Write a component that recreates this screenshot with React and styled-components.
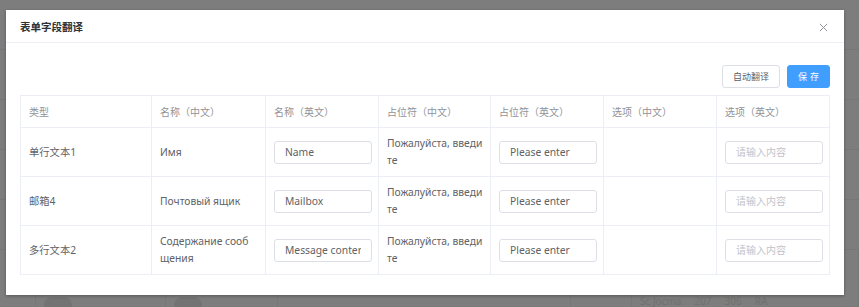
import styled, { createGlobalStyle } from 'styled-components'

const GlobalStyle = createGlobalStyle`
    html, body {
        margin: 0;
        padding: 0;
        background: #ffffff;
    }
    body {
        font-family: "Noto Sans", "Noto Sans CJK SC", sans-serif;
        overflow: hidden;
    }
`

const columns = [
    { title: '类型', width: 131 },
    { title: '名称（中文）', width: 114 },
    { title: '名称（英文）', width: 113 },
    { title: '占位符（中文）', width: 112 },
    { title: '占位符（英文）', width: 113 },
    { title: '选项（中文）', width: 113 },
    { title: '选项（英文）', width: 113 },
]

const rows = [
    { type: '单行文本1', nameZh: 'Имя', nameEn: 'Name', phZh: 'Пожалуйста, введите', phEn: 'Please enter' },
    { type: '邮箱4', nameZh: 'Почтовый ящик', nameEn: 'Mailbox', phZh: 'Пожалуйста, введите', phEn: 'Please enter' },
    { type: '多行文本2', nameZh: 'Содержание сообщения', nameEn: 'Message content', phZh: 'Пожалуйста, введите', phEn: 'Please enter' },
]

const App = () => {
    return (
        <>
            <GlobalStyle />
            <Page>
                <PageRow />
                <PageRow />
                <PageRow />
                <PageRow />
                <PageRow />
                <BottomRow>
                    <BottomCell w={36} />
                    <BottomCell w={130}><Switch /></BottomCell>
                    <BottomCell w={112}><Switch /></BottomCell>
                    <BottomCell w={293} />
                    <BottomCell w={61} />
                    <BottomCell w={227}>
                        <FaintText>Sc Jocma&nbsp;&nbsp;&nbsp;&nbsp;&nbsp;207&nbsp;&nbsp;&nbsp;&nbsp;&nbsp;306&nbsp;&nbsp;&nbsp;&nbsp;&nbsp;RA</FaintText>
                    </BottomCell>
                </BottomRow>
                <Overlay>
                    <Dialog>
                        <Header>
                            <Title>表单字段翻译</Title>
                            <Close>
                                <svg width="9" height="9" viewBox="0 0 10 10">
                                    <path d="M1 1L9 9M9 1L1 9" stroke="#909399" strokeWidth="1.1" />
                                </svg>
                            </Close>
                        </Header>
                        <Body>
                            <Toolbar>
                                <Button>自动翻译</Button>
                                <Button primary>保存</Button>
                            </Toolbar>
                            <Table>
                                <colgroup>
                                    {columns.map(c => <col key={c.title} style={{ width: c.width }} />)}
                                </colgroup>
                                <thead>
                                    <tr>
                                        {columns.map(c => <Th key={c.title}>{c.title}</Th>)}
                                    </tr>
                                </thead>
                                <tbody>
                                    {rows.map(r => (
                                        <tr key={r.type}>
                                            <Td>{r.type}</Td>
                                            <Td pr={11}>{r.nameZh}</Td>
                                            <Td><Input value={r.nameEn} readOnly /></Td>
                                            <Td pr={5}>{r.phZh}</Td>
                                            <Td><Input value={r.phEn} readOnly /></Td>
                                            <Td />
                                            <Td><Input placeholder="请输入内容" readOnly /></Td>
                                        </tr>
                                    ))}
                                </tbody>
                            </Table>
                        </Body>
                    </Dialog>
                </Overlay>
            </Page>
        </>
    )
}

const Page = styled.div`
    position: relative;
    width: 859px;
    height: 307px;
    display: flex;
    flex-direction: column;
    background: #fafafa;
`

const PageRow = styled.div`
    height: 49px;
    border-bottom: 1px solid #ececec;
`

const BottomRow = styled.div`
    display: flex;
    flex: 1;
    align-items: flex-end;
`

const BottomCell = styled.div`
    width: ${p => p.w}px;
    height: 100%;
    border-right: 1px solid #eeeeee;
    box-sizing: border-box;
    display: flex;
    align-items: flex-end;
    padding-left: 8px;
`

const Switch = styled.div`
    width: 28px;
    height: 10px;
    border-radius: 8px 8px 0 0;
    background: #e6e6e6;
`

const FaintText = styled.div`
    font-size: 10px;
    color: #e2e2e2;
    line-height: 12px;
    white-space: nowrap;
`

const Overlay = styled.div`
    position: absolute;
    inset: 0;
    background: rgba(0, 0, 0, 0.5);
    padding: 10px 0 0 6px;
`

const Dialog = styled.div`
    width: 838px;
    height: 285px;
    background: #ffffff;
    box-shadow: 0 1px 3px rgba(0, 0, 0, 0.3);
    display: flex;
    flex-direction: column;
`

const Header = styled.div`
    height: 32px;
    border-bottom: 1px solid #ebeef5;
    display: flex;
    align-items: center;
    justify-content: space-between;
    padding: 0 16px 0 14px;
`

const Title = styled.div`
    font-family: "Noto Sans CJK SC", sans-serif;
    font-size: 10.5px;
    font-weight: 700;
    color: #303133;
    padding-top: 1px;
`

const Close = styled.div`
    display: flex;
    align-items: center;
    padding-top: 2px;
`

const Body = styled.div`
    padding: 22px 14px 0 14px;
`

const Toolbar = styled.div`
    display: flex;
    justify-content: flex-end;
    gap: 7px;
    margin-bottom: 7px;
`

const Button = styled.div`
    height: 23px;
    box-sizing: border-box;
    padding: 0 ${p => (p.primary ? '7px 0 10px' : '10px')};
    display: flex;
    align-items: center;
    font-family: "Noto Sans CJK SC", sans-serif;
    font-size: 9px;
    letter-spacing: ${p => (p.primary ? 3 : 0)}px;
    border-radius: 3px;
    border: 1px solid ${p => (p.primary ? '#409eff' : '#dcdfe6')};
    background: ${p => (p.primary ? '#409eff' : '#ffffff')};
    color: ${p => (p.primary ? '#ffffff' : '#606266')};
`

const Table = styled.table`
    width: 809px;
    table-layout: fixed;
    border-collapse: collapse;
    border: 1px solid #ebeef5;
    font-size: 10.3px;
`

const Th = styled.th`
    height: 31px;
    padding: 0 8px;
    text-align: left;
    font-weight: 400;
    font-size: 10px;
    color: #909399;
    font-family: "Noto Sans CJK SC", sans-serif;
    border: 1px solid #ebeef5;
    white-space: nowrap;
`

const Td = styled.td`
    height: 48px;
    padding: 0 ${p => p.pr ?? 7}px 0 8px;
    color: #606266;
    line-height: 17px;
    border: 1px solid #ebeef5;
    vertical-align: middle;
    word-break: break-all;
`

const Input = styled.input`
    width: calc(100% + 1px);
    height: 23px;
    box-sizing: border-box;
    border: 1px solid #dcdfe6;
    border-radius: 3px;
    padding: 0 10px;
    font-family: "Noto Sans", "Noto Sans CJK SC", sans-serif;
    font-size: 10.3px;
    color: #606266;
    outline: none;
    display: block;
    &::placeholder {
        color: #c0c4cc;
        font-family: "Noto Sans CJK SC", sans-serif;
        font-size: 10px;
    }
`

export default App
